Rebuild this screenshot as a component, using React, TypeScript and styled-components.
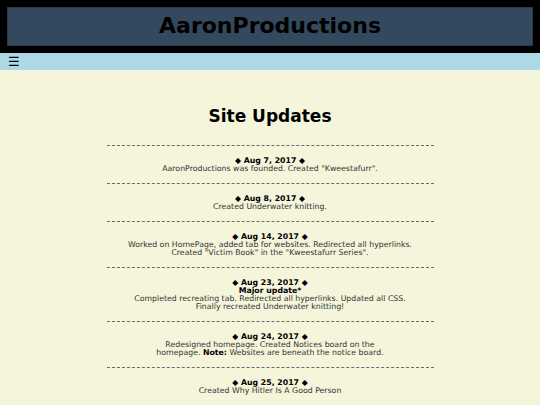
import React from "react";
import styled, { createGlobalStyle } from "styled-components";

const Global = createGlobalStyle`
  html, body { margin: 0; padding: 0; }
  body {
    background: #f5f5dc;
    font-family: "DejaVu Sans", Verdana, sans-serif;
    color: #000;
  }
`;

const Header = styled.header`
  background: #000;
  padding: 7px;
`;

const TitleBox = styled.h1`
  margin: 0;
  height: 37px;
  background: #34495e;
  border: 1px solid #2a3a4a;
  text-align: center;
  font-size: 22px;
  font-weight: bold;
  line-height: 36px;
  color: #000;
`;

const NavBar = styled.nav`
  background: #add8e6;
  height: 17px;
  padding-left: 8px;
  display: flex;
  align-items: center;
`;

const MenuIcon = styled.span`
  font-size: 13px;
  font-weight: bold;
  line-height: 17px;
  color: #000;
`;

const Main = styled.main`
  width: 327px;
  margin: 0 auto;
  padding-top: 34px;
  text-align: center;
`;

const Heading = styled.h2`
  margin: 0 0 17px;
  font-size: 17px;
  line-height: 24px;
  font-weight: bold;
`;

const Divider = styled.hr`
  margin: 0;
  border: none;
  border-top: 1px dashed #6a6a6a;
  height: 0;
`;

const Entry = styled.section`
  padding: 11px 0 10px;
  font-size: 7.8px;
  line-height: 8px;
`;

const DateLine = styled.div`
  font-weight: bold;
  color: #000;
`;

const Note = styled.div<{ $bold?: boolean }>`
  color: ${(p) => (p.$bold ? "#000" : "#333")};
  font-weight: ${(p) => (p.$bold ? "bold" : "normal")};
`;

const Strong = styled.b`
  color: #000;
`;

type Line = { text: React.ReactNode; bold?: boolean };
type Update = { date: string; lines: Line[] };

const updates: Update[] = [
  { date: "Aug 7, 2017", lines: [{ text: 'AaronProductions was founded. Created "Kweestafurr".' }] },
  { date: "Aug 8, 2017", lines: [{ text: "Created Underwater knitting." }] },
  {
    date: "Aug 14, 2017",
    lines: [
      { text: "Worked on HomePage, added tab for websites. Redirected all hyperlinks." },
      { text: 'Created "Victim Book" in the "Kweestafurr Series".' },
    ],
  },
  {
    date: "Aug 23, 2017",
    lines: [
      { text: "Major update*", bold: true },
      { text: "Completed recreating tab. Redirected all hyperlinks. Updated all CSS." },
      { text: "Finally recreated Underwater knitting!" },
    ],
  },
  {
    date: "Aug 24, 2017",
    lines: [
      { text: "Redesigned homepage. Created Notices board on the" },
      {
        text: (
          <>
            homepage. <Strong>Note:</Strong> Websites are beneath the notice board.
          </>
        ),
      },
    ],
  },
  { date: "Aug 25, 2017", lines: [{ text: "Created Why Hitler Is A Good Person" }] },
];

export default function App() {
  return (
    <>
      <Global />
      <Header>
        <TitleBox>AaronProductions</TitleBox>
      </Header>
      <NavBar>
        <MenuIcon>☰</MenuIcon>
      </NavBar>
      <Main>
        <Heading>Site Updates</Heading>
        {updates.map((u) => (
          <React.Fragment key={u.date}>
            <Divider />
            <Entry>
              <DateLine>◆ {u.date} ◆</DateLine>
              {u.lines.map((l, i) => (
                <Note key={i} $bold={l.bold}>
                  {l.text}
                </Note>
              ))}
            </Entry>
          </React.Fragment>
        ))}
      </Main>
    </>
  );
}
